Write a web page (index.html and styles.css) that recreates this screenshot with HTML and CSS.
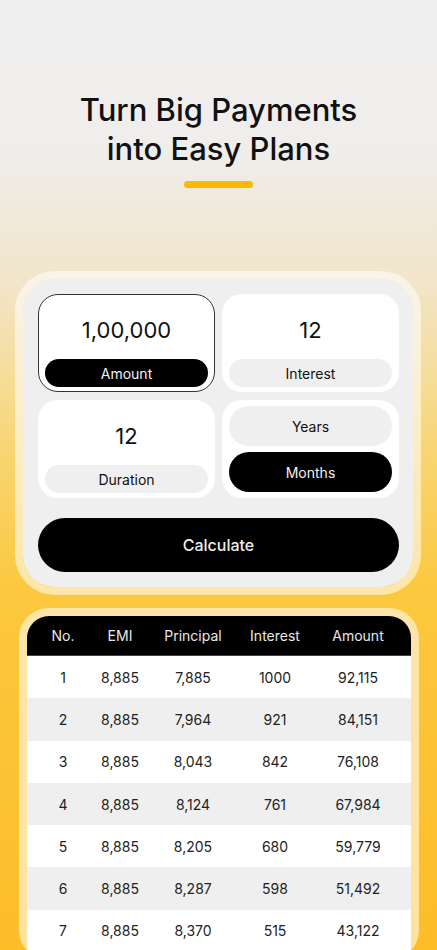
FILE: index.html
```html
<!DOCTYPE html>
<html lang="en">
<head>
    <meta charset="UTF-8">
    <meta name="viewport" content="width=device-width, initial-scale=1.0">
    <title>EMI Calculator</title>
    <link rel="stylesheet" href="styles.css">
</head>
<body>
    <div class="page">
        <h1>Turn Big Payments<br>into Easy Plans</h1>
        <div class="accent"></div>

        <div class="card">
            <div class="card-inner">
                <div class="fields">
                    <div class="field active">
                        <div class="value">1,00,000</div>
                        <div class="label">Amount</div>
                    </div>
                    <div class="field">
                        <div class="value">12</div>
                        <div class="label">Interest</div>
                    </div>
                    <div class="field">
                        <div class="value">12</div>
                        <div class="label">Duration</div>
                    </div>
                    <div class="field toggle">
                        <div class="option">Years</div>
                        <div class="option selected">Months</div>
                    </div>
                </div>
                <button type="button" class="calc">Calculate</button>
            </div>
        </div>

        <div class="card table-card">
            <div class="table">
                <div class="row head">
                    <span>No.</span><span>EMI</span><span>Principal</span><span>Interest</span><span>Amount</span>
                </div>
                <div class="row"><span>1</span><span>8,885</span><span>7,885</span><span>1000</span><span>92,115</span></div>
                <div class="row"><span>2</span><span>8,885</span><span>7,964</span><span>921</span><span>84,151</span></div>
                <div class="row"><span>3</span><span>8,885</span><span>8,043</span><span>842</span><span>76,108</span></div>
                <div class="row"><span>4</span><span>8,885</span><span>8,124</span><span>761</span><span>67,984</span></div>
                <div class="row"><span>5</span><span>8,885</span><span>8,205</span><span>680</span><span>59,779</span></div>
                <div class="row"><span>6</span><span>8,885</span><span>8,287</span><span>598</span><span>51,492</span></div>
                <div class="row"><span>7</span><span>8,885</span><span>8,370</span><span>515</span><span>43,122</span></div>
            </div>
        </div>
    </div>
</body>
</html>
```

FILE: styles.css
```css
body {
    margin: 0;
    font-family: Inter, "Noto Sans", sans-serif;
    color: #111;
    background: linear-gradient(180deg, #efefef 0%, #efeeec 15%, #f2e5c8 30%, #f8d675 47%, #fbc83f 62%, #fdbd29 100%) fixed;
    min-height: 100vh;
}
.page {
    padding: 90px 0 0;
}
h1 {
    margin: 0;
    text-align: center;
    font-size: 31px;
    line-height: 39px;
    font-weight: 500;
    color: #111;
}
.accent {
    width: 69px;
    height: 7px;
    margin: 13px auto 0;
    border-radius: 4px;
    background-color: #ffb800;
}
.card {
    margin: 83px 16px 0 15px;
    border: 8px solid rgba(255, 255, 255, 0.55);
    border-radius: 40px;
}
.card-inner {
    background: #efefef;
    border-radius: 32px;
    padding: 15px 14px 15px 15px;
}
.fields {
    display: grid;
    grid-template-columns: 1fr 1fr;
    grid-auto-rows: 98px;
    gap: 8px 7px;
}
.field {
    background: white;
    border-radius: 20px;
    padding: 6px 6px 4px;
    display: flex;
    flex-direction: column;
    box-sizing: border-box;
    border: 1px solid transparent;
}
.field.active {
    border-color: #333;
}
.value {
    flex: 1;
    display: flex;
    align-items: center;
    justify-content: center;
    font-size: 22px;
}
.label {
    height: 28px;
    line-height: 29px;
    border-radius: 14px;
    background: #efefef;
    text-align: center;
    font-size: 14px;
    color: #111;
}
.field.active .label {
    background: black;
    color: #f2f2f2;
}
.toggle {
    gap: 6px;
    padding: 5px 6px;
}
.option {
    flex: 1;
    display: flex;
    align-items: center;
    justify-content: center;
    border-radius: 20px;
    background: #efefef;
    font-size: 14px;
}
.option.selected {
    background: black;
    color: #f2f2f2;
}
.calc {
    display: block;
    width: 100%;
    height: 54px;
    margin-top: 20px;
    border: none;
    border-radius: 27px;
    background: black;
    color: #ececec;
    font-family: inherit;
    font-size: 16px;
    font-weight: 500;
}
.table-card {
    margin: 13px 18px 0 19px;
    border-radius: 30px;
}
.table {
    border-radius: 22px 22px 0 0;
    overflow: hidden;
    background: white;
}
.row {
    display: grid;
    grid-template-columns: 72px 42px 104px 60px 1fr;
    height: 42.3px;
    font-size: 14px;
    color: #222;
}
.row span {
    display: flex;
    align-items: center;
    justify-content: center;
    width: 0;
    min-width: 100%;
    white-space: nowrap;
}
.row:nth-child(odd) {
    background: #efefef;
}
.row.head {
    height: 40px;
    background: black;
    color: #e8e8e8;
    border-bottom: 1px solid #444;
    box-sizing: border-box;
}
```
